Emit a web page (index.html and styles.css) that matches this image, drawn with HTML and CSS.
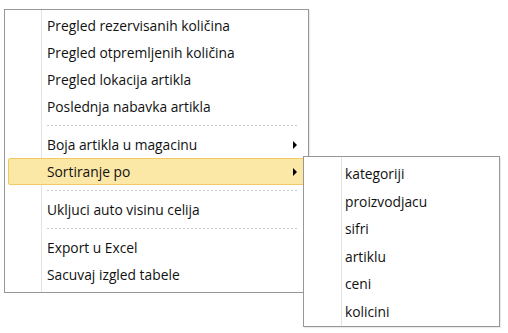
FILE: index.html
```html
<!DOCTYPE html>
<html lang="sr">
<head>
    <meta charset="UTF-8">
    <title>Meni</title>
    <link rel="stylesheet" href="styles.css">
</head>
<body>
    <div class="menu main-menu">
        <div class="item">Pregled rezervisanih količina</div>
        <div class="item">Pregled otpremljenih količina</div>
        <div class="item">Pregled lokacija artikla</div>
        <div class="item">Poslednja nabavka artikla</div>
        <div class="separator"></div>
        <div class="item">Boja artikla u magacinu <span class="arrow"></span></div>
        <div class="item active">Sortiranje po <span class="arrow"></span></div>
        <div class="separator"></div>
        <div class="item">Ukljuci auto visinu celija</div>
        <div class="separator"></div>
        <div class="item">Export u Excel</div>
        <div class="item">Sacuvaj izgled tabele</div>
    </div>

    <div class="menu sub-menu">
        <div class="item">kategoriji</div>
        <div class="item">proizvodjacu</div>
        <div class="item">sifri</div>
        <div class="item">artiklu</div>
        <div class="item">ceni</div>
        <div class="item">kolicini</div>
    </div>
</body>
</html>
```
FILE: styles.css
```css
* {
    box-sizing: border-box;
}

body {
    margin: 0;
    background: #ffffff;
    font-family: 'Open Sans', 'Noto Sans', sans-serif;
    font-size: 13.8px;
    color: #111111;
}

.menu {
    background-color: #ffffff;
    border: 1px solid #979797;
    box-shadow: 1px 1px 1px rgba(0, 0, 0, 0.08);
}

.main-menu {
    width: 305px;
    height: 284px;
    margin: 9px 0 0 4px;
    padding: 2px 3px;
    background-image: linear-gradient(to right, transparent 36px, #e2e3e3 36px, #e2e3e3 37px, transparent 37px);
}

.sub-menu {
    position: absolute;
    left: 303px;
    top: 156px;
    width: 197px;
    height: 171px;
    padding: 3px 2px;
    background-image: linear-gradient(to right, transparent 37px, #e2e3e3 37px, #e2e3e3 38px, transparent 38px);
}

.item {
    display: flex;
    justify-content: space-between;
    align-items: center;
    height: 27px;
    padding: 0 7px 0 38px;
    border: 1px solid transparent;
    border-radius: 2px;
    white-space: nowrap;
}

.sub-menu .item {
    height: 27.5px;
}

.item.active {
    background-color: #fbe7a6;
    border-color: #f1c964;
}

.arrow {
    width: 0;
    height: 0;
    border-left: 4px solid #000000;
    border-top: 4px solid transparent;
    border-bottom: 4px solid transparent;
}

.separator {
    height: 11px;
    margin: 0 6px 0 39px;
    background-image: repeating-linear-gradient(to right, #c9c9c9 0 2px, transparent 2px 4px);
    background-size: 100% 1px;
    background-position: 0 5px;
    background-repeat: no-repeat;
}
```
